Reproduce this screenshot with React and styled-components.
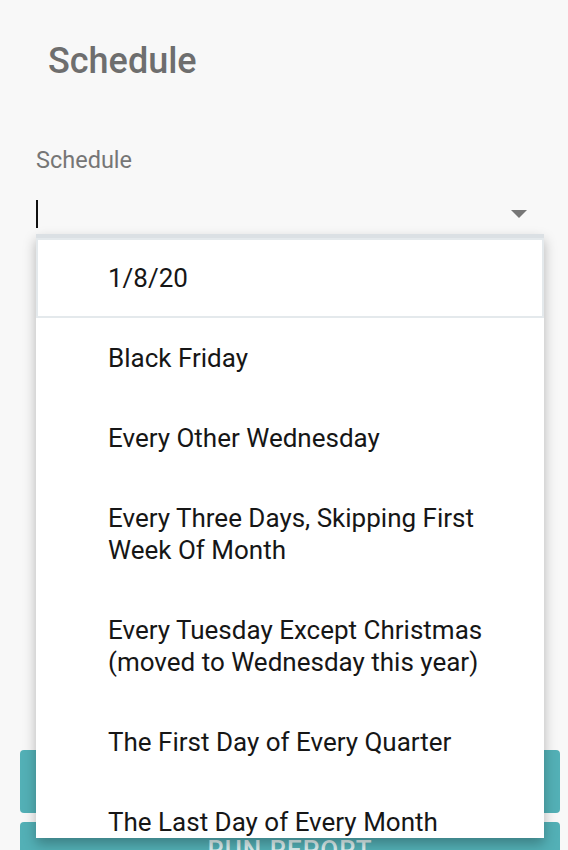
import React from 'react';
import styled, { createGlobalStyle } from 'styled-components';

const GlobalStyle = createGlobalStyle`
  html, body {
    margin: 0;
    padding: 0;
    background: #f8f8f8;
    font-family: Roboto, 'Liberation Sans', sans-serif;
  }
`;

const Page = styled.div`
  min-height: 850px;
  padding: 0 8px 0 20px;
  box-sizing: border-box;
  overflow: hidden;
`;

const Title = styled.h1`
  margin: 0;
  padding: 41px 0 0 28px;
  font-size: 36px;
  line-height: 40px;
  font-weight: 500;
  color: #6e6e6e;
`;

const Field = styled.div`
  position: relative;
  margin: 67px 16px 0 16px;
  width: 508px;
`;

const Label = styled.label`
  display: block;
  font-size: 23.5px;
  line-height: 24px;
  color: #767676;
`;

const InputRow = styled.div`
  display: flex;
  align-items: center;
  justify-content: space-between;
  height: 42px;
  margin-top: 20px;
  padding-right: 17px;
`;

const Cursor = styled.span`
  width: 2px;
  height: 28px;
  margin-top: 2px;
  background: #111;
`;

const Arrow = styled.span`
  width: 0;
  height: 0;
  border-left: 8px solid transparent;
  border-right: 8px solid transparent;
  border-top: 8px solid #777;
  margin-top: 2px;
`;

const Menu = styled.ul`
  position: absolute;
  top: 100%;
  left: 0;
  right: 0;
  height: 600px;
  margin: 0;
  padding: 0;
  list-style: none;
  background: #fff;
  border-top: 4px solid #dbe0e4;
  box-shadow: 0 6px 12px rgba(0, 0, 0, 0.28);
  overflow: hidden;
  z-index: 2;
`;

const Item = styled.li`
  padding: 22px 35px 22px 70px;
  font-size: 26px;
  line-height: 32px;
  color: #161616;
  border: 2px solid ${p => (p.active ? '#e4e9ec' : 'transparent')};
`;

const Buttons = styled.div`
  display: flex;
  flex-direction: column;
  gap: 9px;
  margin-top: 516px;
  width: 540px;
`;

const Button = styled.button`
  height: 63px;
  padding: 0 0 8px;
  border: none;
  border-radius: 4px;
  background: #53b0b6;
  color: #dcefef;
  font-family: Roboto, 'Liberation Sans', sans-serif;
  font-size: 26px;
  font-weight: 500;
  letter-spacing: 1px;
  text-transform: uppercase;
`;

const options = [
  '1/8/20',
  'Black Friday',
  'Every Other Wednesday',
  'Every Three Days, Skipping First Week Of Month',
  'Every Tuesday Except Christmas (moved to Wednesday this year)',
  'The First Day of Every Quarter',
  'The Last Day of Every Month',
];

const App = () => (
  <Page>
    <GlobalStyle />
    <Title>Schedule</Title>
    <Field>
      <Label>Schedule</Label>
      <InputRow>
        <Cursor />
        <Arrow />
      </InputRow>
      <Menu>
        {options.map((opt, i) => (
          <Item key={opt} active={i === 0}>{opt}</Item>
        ))}
      </Menu>
    </Field>
    <Buttons>
      <Button>Save</Button>
      <Button>Run Report</Button>
    </Buttons>
  </Page>
);

export default App;
